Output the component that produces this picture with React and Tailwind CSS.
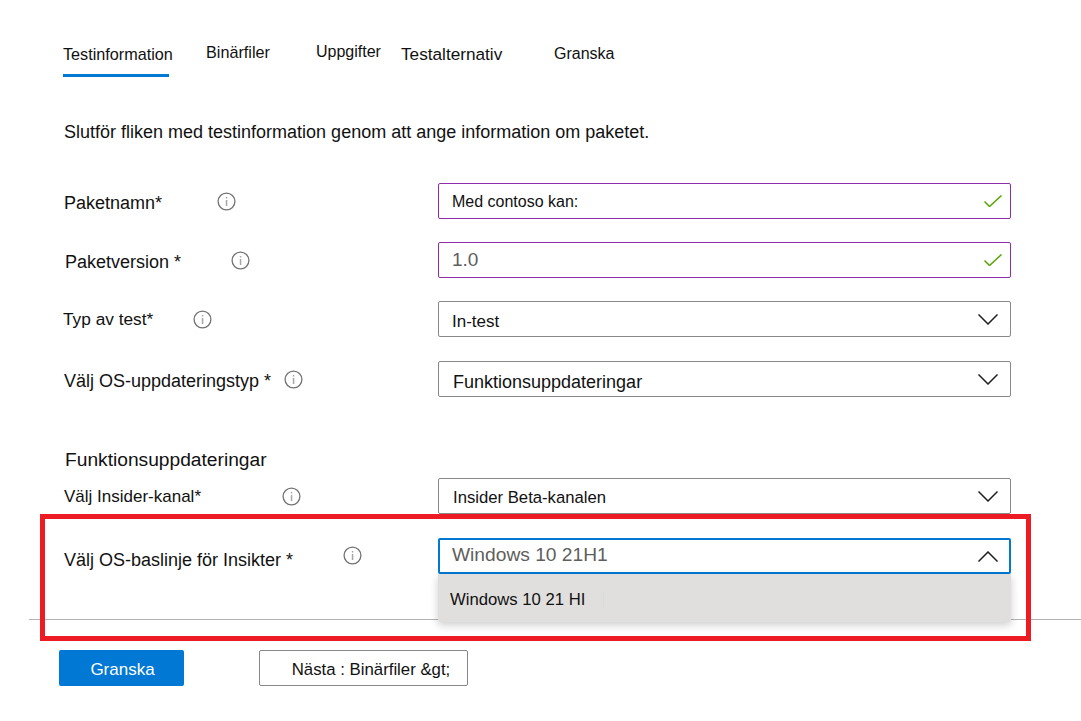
import React from "react";

// small round info icon next to the labels
const InfoIcon = () => (
  <svg width="19" height="19" viewBox="0 0 19 19" fill="none" className="shrink-0">
    <circle cx="9.5" cy="9.5" r="8.4" stroke="#737373" strokeWidth="1.3" />
    <rect x="8.8" y="8" width="1.5" height="6" fill="#a6a6a6" />
    <rect x="8.8" y="5" width="1.5" height="1.5" fill="#a6a6a6" />
  </svg>
);

const CheckIcon = () => (
  <svg width="18" height="12" viewBox="0 0 18 12" fill="none" className="mr-[-4px]">
    <path d="M0.5 6.5L5.5 11.5L17.5 0.5" stroke="#57a300" strokeWidth="1.5" />
  </svg>
);

const ChevronDown = () => (
  <svg width="20" height="11" viewBox="0 0 20 11" fill="none">
    <path d="M0.5 0.5L10 10L19.5 0.5" stroke="#201f1e" strokeWidth="1.5" />
  </svg>
);

const ChevronUp = () => (
  <svg width="20" height="11" viewBox="0 0 20 11" fill="none">
    <path d="M0.5 10.5L10 1L19.5 10.5" stroke="#201f1e" strokeWidth="1.5" />
  </svg>
);

const Row = ({ label, iconLeft, labelClass = "text-[18px]", children, className = "" }) => (
  <div className={`flex h-9 pl-[64px] ${className}`}>
    <div className="relative w-[374px] flex items-center">
      <span className={`leading-6 whitespace-nowrap text-[#111] ${labelClass}`}>{label}</span>
      <span className="absolute top-[9px]" style={{ left: iconLeft }}>
        <InfoIcon />
      </span>
    </div>
    {children}
  </div>
);

const Field = ({ text, textClass, icon, purple }) => (
  <div
    className={`w-[573px] h-9 bg-white border rounded-[2px] flex items-center justify-between pl-[13px] pr-[12px] ${
      purple ? "border-[#8f2da8]" : "border-[#8a8886]"
    }`}
  >
    <span className={`whitespace-nowrap ${textClass}`}>{text}</span>
    {icon}
  </div>
);

export default function App() {
  return (
    <div className="relative w-[1081px] h-[721px] overflow-hidden bg-white font-['Liberation_Sans',Arial,sans-serif] text-[#111]">
      {/* tabs */}
      <div className="flex pl-[63px] pt-[43px] h-[77px] text-[16px] leading-[22px]">
        <div className="w-[143px]">
          <div className="w-[106px] whitespace-nowrap text-[16.2px]">Testinformation</div>
          <div className="w-[106px] h-[3px] mt-[9px] bg-[#0078d4]" />
        </div>
        <div className="w-[110px] -mt-[2px] text-[16.2px]">Binärfiler</div>
        <div className="w-[85px] -mt-[2px]">Uppgifter</div>
        <div className="w-[153px] text-[17.2px]">Testalternativ</div>
        <div>Granska</div>
      </div>

      <p className="mt-[43px] ml-[64px] text-[18px] leading-6">
        Slutför fliken med testinformation genom att ange information om paketet.
      </p>

      <Row label="Paketnamn*" iconLeft={153} labelClass="text-[18px] mt-[3px]" className="mt-[39px]">
        <Field text="Med contoso kan:" textClass="text-[16px] mt-[1px]" icon={<CheckIcon />} purple />
      </Row>
      <Row label="Paketversion *" iconLeft={167} labelClass="text-[18px] ml-[1px] mt-[3px]" className="mt-[23px]">
        <Field text="1.0" textClass="text-[19px] text-[#605e5c]" icon={<CheckIcon />} purple />
      </Row>
      <Row label="Typ av test*" iconLeft={129} labelClass="text-[17.3px] -ml-[1px]" className="mt-[23px]">
        <Field text="In-test" textClass="text-[17px] mt-[5px]" icon={<ChevronDown />} />
      </Row>
      <Row label="Välj OS-uppdateringstyp *" iconLeft={220} labelClass="text-[18px] mt-[3px]" className="mt-[24px]">
        <Field text="Funktionsuppdateringar" textClass="text-[18px] ml-[1px] mt-[6px]" icon={<ChevronDown />} />
      </Row>

      <h2 className="mt-[51px] ml-[65px] text-[19.2px] leading-6 font-normal">Funktionsuppdateringar</h2>

      <Row label="Välj Insider-kanal*" iconLeft={218} labelClass="text-[17px] mt-[2px]" className="mt-[6px]">
        <Field text="Insider Beta-kanalen" textClass="text-[16.7px] ml-[1px] mt-[4px]" icon={<ChevronDown />} />
      </Row>

      <div className="flex h-9 pl-[64px] mt-[24px]">
        <div className="relative w-[374px]">
          <span className="block mt-[10px] text-[18px] leading-6 whitespace-nowrap">Välj OS-baslinje för Insikter *</span>
          <span className="absolute top-[8px] left-[279px]">
            <InfoIcon />
          </span>
        </div>
        <div className="relative w-[573px] h-9">
          <div className="h-9 bg-white border-2 border-[#0078d4] rounded-[2px] flex items-center justify-between pl-[12px] pr-[11px]">
            <span className="text-[19.2px] text-[#605e5c] whitespace-nowrap -mt-[1px]">Windows 10 21H1</span>
            <ChevronUp />
          </div>
          {/* open dropdown list */}
          <div className="absolute z-10 top-[36px] left-0 w-[573px] h-[48px] bg-[#e1dfdd] rounded-b-[2px] shadow-[0_3px_8px_rgba(0,0,0,0.2)] flex items-center pl-[12px]">
            <span className="text-[16.7px] whitespace-nowrap mt-[3px]">Windows 10 21 HI</span>
            <span className="ml-[18px] w-px h-[15px] bg-[#d5dcdc] mt-[3px]" />
          </div>
        </div>
      </div>

      <div className="mt-[45px] ml-[29px] h-px bg-[#b3b3b3]" />

      <div className="flex mt-[30px] ml-[59px]">
        <button className="w-[125px] h-9 bg-[#0078d4] text-white text-[17px] rounded-[2px] pt-[4px] pl-[2px]">Granska</button>
        <button className="ml-[75px] w-[209px] h-9 bg-white border border-[#8a8886] rounded-[2px] text-[16.8px] pl-[15px] pt-[4px]">
          Nästa : Binärfiler &amp;gt;
        </button>
      </div>

      {/* red highlight box drawn on top of the screenshot */}
      <div className="absolute left-[40px] top-[514px] w-[991px] h-[127px] border-[5px] border-[#ed1c24] pointer-events-none z-20" />
    </div>
  );
}
